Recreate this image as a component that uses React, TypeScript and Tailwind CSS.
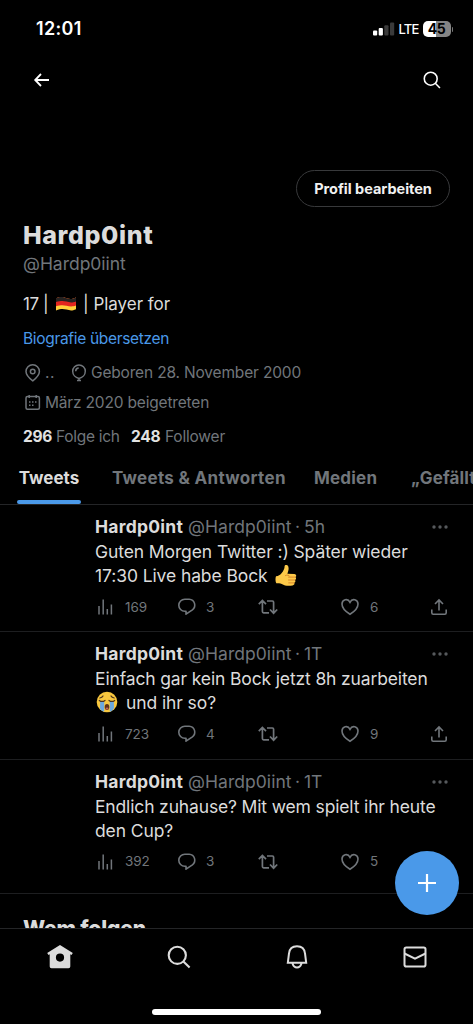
import type { ReactNode } from "react";

function SearchIcon({ className }: { className: string }) {
  return (
    <svg viewBox="0 0 24 24" className={className} fill="none" stroke="currentColor" strokeWidth="2.1" strokeLinecap="butt">
      <circle cx="10.3" cy="10.3" r="8.6" />
      <path d="M16.4 16.4 22.6 22.6" />
    </svg>
  );
}

function StatusBar() {
  return (
    <header className="flex h-14 shrink-0 items-center justify-between pl-[36px] pr-[20px] pt-[2px] text-white">
      <span className="text-[18px] font-semibold leading-none tracking-[0.3px]">12:01</span>
      <div className="flex items-center">
        <svg viewBox="0 0 22 14" className="mr-[4px] h-[14px] w-[22px]">
          <rect x="0" y="8.5" width="4.2" height="5" rx="1" fill="#fff" />
          <rect x="5.7" y="6" width="4.2" height="7.5" rx="1" fill="#fff" />
          <rect x="11.3" y="3.3" width="4.2" height="10.2" rx="1" fill="#3a3a3a" />
          <rect x="17" y="0.5" width="4.2" height="13" rx="1" fill="#3a3a3a" />
        </svg>
        <span className="w-[24px] text-[13px] font-medium leading-none tracking-[-0.8px]">LTE</span>
        <div className="flex h-4 w-7 items-center justify-center rounded-[5px] bg-[linear-gradient(90deg,#fff_46%,#858585_46%)] text-[14px] font-bold leading-none tracking-[-0.5px] text-black">
          45
        </div>
        <span className="ml-px h-[5px] w-[1.5px] rounded-r bg-[#777]" />
      </div>
    </header>
  );
}

function GermanFlag() {
  return (
    <svg viewBox="0 0 22 16" className="h-4 w-[22px]">
      <defs>
        <clipPath id="flag">
          <path d="M1 2.2C6 .2 8 1 11.500 2.200S17 3.200 21 1.400V13.200C17 15 15 14.600 11.500 13.600S6 12.500 1 14.400Z" />
        </clipPath>
      </defs>
      <g clipPath="url(#flag)">
        <rect width="22" height="16" fill="#ffd03b" />
        <path d="M0 0H22V9.200C17 11 15 10.500 11.500 9.700S5 9 0 10.500Z" fill="#e2251f" />
        <path d="M0 0H22V5C17 7 15 6.600 11.500 5.600S5 4.800 0 6.300Z" fill="#252220" />
      </g>
    </svg>
  );
}

function ThumbsUp() {
  return (
    <svg viewBox="0 0 22 23" className="ml-[7px] inline-block h-[23px] w-[22px] align-[-5px]">
      <path d="M1 12.200C3.500 12 5 11.200 6.500 9.300 8.700 6.800 9.600 4.400 9.600 2.300 9.600.6 12.400.4 13.300 2.500 14.100 4.700 13.300 7.300 12.400 9.700L19.300 10C21.600 10.300 21.700 12.700 20.300 13.100 21.500 13.800 21.300 15.700 19.900 16 20.900 16.700 20.500 18.500 19.200 18.800 20 20.300 18.900 21.300 17.500 21.400 13 22.200 9.700 21.600 6.800 19.900 5 19.300 3 19.500 1.300 19.300.3 17.500.3 14 1 12.200Z" fill="#fdc949" />
      <path d="M13.600 13.100H20M13.500 16H19.800M13.700 18.900H19M10.500 11.500C12 10.800 14 11 14.400 12" fill="none" stroke="#d8862c" strokeWidth="1" strokeLinecap="round" />
    </svg>
  );
}

function CryingFace() {
  return (
    <svg viewBox="0 0 22 22" className="ml-px mr-[8px] inline-block size-[22px] align-[-4px]">
      <circle cx="11" cy="11" r="10.300" fill="#f8c73e" />
      <path d="M4.200 10H8.200V20.800C5.500 20 4 18.500 4 17ZM13.800 10H17.800L18 17C17.300 19 16 20 13.800 20.800Z" fill="#6ba8df" />
      <path d="M3.300 9.400C5 10.700 7.200 10.700 9 9.400M13 9.400C14.800 10.700 17 10.700 18.700 9.400M3.800 7C5 6.800 6.500 6 7 5M18.200 7C17 6.800 15.500 6 15 5" fill="none" stroke="#4b3420" strokeWidth="1.200" strokeLinecap="round" />
      <ellipse cx="11" cy="16" rx="2.300" ry="3" fill="#603116" />
      <ellipse cx="11" cy="17.500" rx="1.400" ry="1" fill="#c9655b" />
    </svg>
  );
}

function ProfileHeader() {
  return (
    <section className="flex shrink-0 flex-col pl-[23px] text-[#71767b]">
      <div className="flex h-[37px] justify-end pr-[23px]">
        <button className="flex h-[37px] w-[154px] items-center justify-center whitespace-nowrap rounded-full border-[1.500px] border-[#38393b] text-[14.500px] font-bold tracking-[-0.020px] text-[#f1f1f1]">
          Profil bearbeiten
        </button>
      </div>
      <h1 className="mt-[13px] h-[30px] text-[25px] font-extrabold leading-[30px] tracking-[0.600px] text-[#dcdcdc]">Hardp0int</h1>
      <p className="mt-[4px] h-[20px] text-[17.500px] leading-[20px] tracking-[-0.020px]">@Hardp0iint</p>
      <div className="mt-[20px] flex h-[20px] items-center whitespace-pre text-[17px] leading-[20px] text-[#dcdcdc]">
        <span className="w-[32px] tracking-[-0.4px]">17 |</span>
        <GermanFlag />
        <span className="ml-[6px] tracking-[-0.020px]">| Player for</span>
      </div>
      <p className="mt-[15px] h-[20px] text-[15.500px] leading-[20px] tracking-[-0.320px] text-[#4a99e9]">Biografie übersetzen</p>
      <div className="mt-[14px] flex h-[20px] items-center text-[15.500px]">
        <svg viewBox="0 0 20 20" className="h-[20px] w-[20px]" fill="none" stroke="currentColor" strokeWidth="1.500">
          <path d="M9.800 17.800C6 14.900 3 12 3 8.400a6.700 6.700 0 0 1 13.400 0c0 3.600-3 6.500-6.600 9.400Z" />
          <circle cx="9.700" cy="8.500" r="2.300" />
        </svg>
        <span className="ml-[2px] w-[26px] tracking-[0.5px]">..</span>
        <svg viewBox="0 0 16 20" className="mr-[3px] h-[20px] w-4" fill="none" stroke="currentColor" strokeWidth="1.500">
          <path d="M8 15.400C4.300 14.500 1.700 11.400 1.700 8.200a6.300 6.300 0 0 1 12.600 0c0 3.200-2.600 6.300-6.300 7.200ZM8 15v2.500M6 17.600h4M4.700 8.200C4.700 6.200 6 5 7.700 4.900" />
        </svg>
        <span className="ml-[1px] tracking-[-0.170px]">Geboren 28. November 2000</span>
      </div>
      <div className="mt-[10px] flex h-[20px] items-center text-[15.500px]">
        <svg viewBox="0 0 20 20" className="h-[20px] w-[20px]" fill="none" stroke="currentColor" strokeWidth="1.500">
          <rect x="3" y="3.500" width="13.400" height="12.800" rx="1.500" />
          <path d="M6.200 2v3M13.200 2v3" />
          <path d="M6 8.900h1.500M9 8.900h1.500M12 8.900h1.500M6 12.300h1.500M9 12.300h1.500" strokeWidth="1.500" />
        </svg>
        <span className="ml-[2px] tracking-[-0.180px]">März 2020 beigetreten</span>
      </div>
      <div className="mt-[14px] flex h-[20px] items-center whitespace-nowrap text-[15.500px]">
        <b className="w-[33px] tracking-[-0.3px] text-[#e2e2e2]">296</b>
        <span className="w-[75px] tracking-[-0.3px]">Folge ich</span>
        <b className="w-[34px] tracking-[-0.2px] text-[#e2e2e2]">248</b>
        <span className="tracking-[-0.2px]">Follower</span>
      </div>
    </section>
  );
}

function Tabs() {
  return (
    <nav className="mt-[6px] flex h-[52px] shrink-0 overflow-hidden whitespace-nowrap border-b border-[#242527] pl-[17px] text-[17px] font-bold leading-[51px] text-[#71767b]">
      <div className="flex w-[64px] shrink-0 flex-col items-center text-[#dcdcdc]">
        <span className="h-[47px] tracking-[0px]">Tweets</span>
        <span className="h-1 w-full shrink-0 rounded-full bg-[#4a99e9]" />
      </div>
      <span className="ml-[31px] w-[202px] shrink-0 tracking-[0.300px]">Tweets &amp; Antworten</span>
      <span className="w-[97px] shrink-0 tracking-[0.200px]">Medien</span>
      <span className="shrink-0 tracking-[0.150px]">„Gefällt mir“</span>
    </nav>
  );
}

function Actions({ views, replies, likes }: { views: string; replies: string; likes: string }) {
  return (
    <div className="flex h-[20px] items-center text-[13.500px] text-[#71767b]">
      <svg viewBox="0 0 18 18" className="h-[18px] w-[18px]" fill="none" stroke="currentColor" strokeWidth="1.500">
        <path d="M4 8v8.500M8.200 1.500v15M12.300 11v5.500M16.400 6.500v10" />
      </svg>
      <span className="ml-[12px] w-[52px] tracking-[-0.1px]">{views}</span>
      <svg viewBox="0 0 20 18" className="h-[18px] w-[20px]" fill="none" stroke="currentColor" strokeWidth="1.600" strokeLinejoin="round">
        <path d="M8 13.200H7.800A5.700 5.700 0 0 1 7.800 1.200h4.400a5.900 5.900 0 0 1 3.200 10.600L9 16.200v-3Z" />
      </svg>
      <span className="ml-[9px] w-[52px]">{replies}</span>
      <svg viewBox="0 0 20 18" className="h-[18px] w-[20px]" fill="none" stroke="currentColor" strokeWidth="1.700">
        <path d="M.8 6.200 4.400 2.400 8 6.200M4.400 3v10.600q0 1.200 1.200 1.200H11M9 3h5.400q1.200 0 1.200 1.200v10.500M12 11.500l3.600 3.700 3.600-3.700" />
      </svg>
      <svg viewBox="0 0 20 18" className="ml-[62px] h-[18px] w-[20px]" fill="none" stroke="currentColor" strokeWidth="1.600">
        <path d="M10 16.200C5 13.200 2 9.500 2 6c0-4.500 5.800-6.100 8-1.700C12.200-.1 18 1.500 18 6c0 3.500-3 7.200-8 10.200Z" />
      </svg>
      <span className="ml-[10px] w-[60px]">{likes}</span>
      <svg viewBox="0 0 18 18" className="h-[18px] w-[18px]" fill="none" stroke="currentColor" strokeWidth="1.600">
        <path d="M1.800 11.500v3.300q0 1.400 1.400 1.400h11.600q1.400 0 1.400-1.400v-3.300M9 12.500V2M5 6l4-4 4 4" />
      </svg>
    </div>
  );
}

type TweetProps = { time: string; first: ReactNode; second: ReactNode; views: string; replies: string; likes: string; height: string };

function Tweet({ time, first, second, views, replies, likes, height }: TweetProps) {
  return (
    <article className={"flex shrink-0 flex-col border-b border-[#1d1e20] pl-[95px] pt-[10px] " + height}>
      <div className="flex h-6 items-center whitespace-nowrap text-[17.500px] leading-6 text-[#71767b]">
        <b className="w-[93px] tracking-[0.250px] text-[#dcdcdc]">Hardp0int</b>
        <span className="w-[107px] tracking-[0.050px]">@Hardp0iint</span>
        <span className="w-[9px]">·</span>
        <span className="w-[127px]">{time}</span>
        <svg viewBox="0 0 18 4" className="h-1 w-[18px]" fill="#56595c">
          <circle cx="3" cy="2" r="1.700" />
          <circle cx="9" cy="2" r="1.700" />
          <circle cx="15" cy="2" r="1.700" />
        </svg>
      </div>
      <div className="h-[58px] whitespace-nowrap pt-px text-[17.500px] leading-6 text-[#dcdcdc]">
        <p className="h-6">{first}</p>
        <p className="h-6">{second}</p>
      </div>
      <Actions views={views} replies={replies} likes={likes} />
    </article>
  );
}

function BottomNav() {
  return (
    <nav className="flex h-[96px] shrink-0 flex-col items-center border-t border-[#242527] bg-black text-[#dcdcdc]">
      <div className="flex h-[56px] w-full items-center justify-between pl-[46px] pr-[45px]">
        <svg viewBox="0 0 28 26" className="h-[26px] w-[28px]" fill="currentColor" fillRule="evenodd">
          <path d="M14 1 26.800 9 25.500 11 24.300 10.300V22.500Q24.300 24.300 22.500 24.300H5.500Q3.700 24.300 3.700 22.500V10.300L2.500 11 1.200 9ZM14 9.500a4.100 4.100 0 1 0 0 8.200 4.100 4.100 0 0 0 0-8.200Z" />
        </svg>
        <SearchIcon className="mr-[2px] h-[24px] w-[24px]" />
        <svg viewBox="0 0 24 26" className="h-[26px] w-[24px]" fill="none" stroke="currentColor" strokeWidth="2">
          <path d="M2.800 18.800 4 9.500C4.500 4.800 7.700 2.300 12 2.300s7.500 2.500 8 7.200l1.200 9.300ZM7.500 19.500c.8 2.600 2.200 4 4.500 4s3.700-1.400 4.500-4" />
        </svg>
        <svg viewBox="0 0 26 24" className="h-[24px] w-[26px]" fill="none" stroke="currentColor" strokeWidth="2">
          <rect x="2.500" y="2.500" width="21" height="19" rx="1.800" />
          <path d="m2.500 8.500 10.500 5.200 10.500-5.200" />
        </svg>
      </div>
      <div className="mt-[24px] h-[6px] w-[169px] rounded-full bg-white" />
    </nav>
  );
}

export default function App() {
  return (
    <main className="relative flex h-[1024px] w-[473px] flex-col overflow-hidden bg-black font-['Inter',sans-serif]">
      <StatusBar />
      <div className="flex h-[114px] shrink-0 items-start justify-between pl-[33px] pr-[32px] pt-[15px] text-white">
        <svg viewBox="0 0 18 18" className="h-[18px] w-[18px]" fill="none" stroke="currentColor" strokeWidth="1.800">
          <path d="M8 3 2.200 9 8 15M2.500 9H16" />
        </svg>
        <SearchIcon className="h-[18px] w-[18px]" />
      </div>
      <ProfileHeader />
      <Tabs />
      <Tweet
        height="h-[127px]"
        time="5h"
        first={<span className="tracking-[-0.1px]">Guten Morgen Twitter :) Später wieder</span>}
        second={<><span className="tracking-[-0.1px]">17:30 Live habe Bock</span><ThumbsUp /></>}
        views="169"
        replies="3"
        likes="6"
      />
      <Tweet
        height="h-[127.5px]"
        time="1T"
        first={<span className="tracking-[-0.140px]">Einfach gar kein Bock jetzt 8h zuarbeiten</span>}
        second={<><CryingFace /><span className="tracking-[-0.1px]">und ihr so?</span></>}
        views="723"
        replies="4"
        likes="9"
      />
      <Tweet
        height="h-[134.5px]"
        time="1T"
        first={<span className="tracking-[-0.150px]">Endlich zuhause? Mit wem spielt ihr heute</span>}
        second={<span className="tracking-[-0.1px]">den Cup?</span>}
        views="392"
        replies="3"
        likes="5"
      />
      <div className="min-h-0 flex-1 overflow-hidden pl-[23px] pt-[21px]">
        <h2 className="text-[21px] font-extrabold leading-[28px] tracking-[-0.150px] text-[#dcdcdc]">Wem folgen</h2>
      </div>
      <BottomNav />
      <button className="absolute left-[395px] top-[851px] flex size-[64px] items-center justify-center rounded-full bg-[#4a99e9]" aria-label="Tweet">
        <svg viewBox="0 0 20 20" className="size-[20px]" stroke="#fff" strokeWidth="2.200">
          <path d="M10 1v18M1 10h18" />
        </svg>
      </button>
    </main>
  );
}
